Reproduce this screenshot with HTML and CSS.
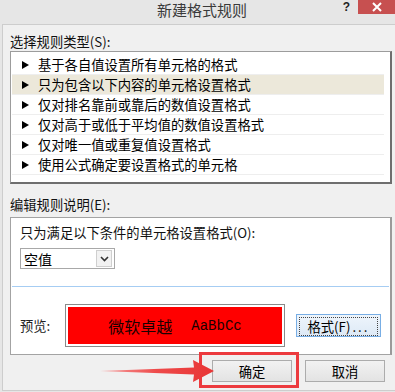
FILE: index.html
```html
<!DOCTYPE html>
<html lang="zh-CN">
<head>
    <meta charset="UTF-8">
    <title>新建格式规则</title>
    <link rel="stylesheet" href="styles.css">
</head>
<body>
    <div class="window">
        <div class="titlebar">
            <div></div>
            <div class="title">新建格式规则</div>
            <div class="controls">
                <span class="help">?</span>
                <span class="close">
                    <svg width="12" height="10" viewBox="0 0 12 10"><path d="M2 1 L10 9 M10 1 L2 9" stroke="#fff" stroke-width="2"/></svg>
                </span>
            </div>
        </div>

        <div class="client">
            <div class="label">选择规则类型(S):</div>
            <div class="listbox">
                <div class="item"><span class="tri"></span>基于各自值设置所有单元格的格式</div>
                <div class="item selected"><span class="tri"></span>只为包含以下内容的单元格设置格式</div>
                <div class="item"><span class="tri"></span>仅对排名靠前或靠后的数值设置格式</div>
                <div class="item"><span class="tri"></span>仅对高于或低于平均值的数值设置格式</div>
                <div class="item"><span class="tri"></span>仅对唯一值或重复值设置格式</div>
                <div class="item"><span class="tri"></span>使用公式确定要设置格式的单元格</div>
            </div>

            <div class="label label-edit">编辑规则说明(E):</div>
            <div class="editbox">
                <div class="cond">只为满足以下条件的单元格设置格式(O):</div>
                <div class="select">
                    <span class="select-text">空值</span>
                    <span class="select-btn">
                        <svg width="9" height="6" viewBox="0 0 9 6"><path d="M1 1 L4.5 4.5 L8 1" fill="none" stroke="#333" stroke-width="1.6"/></svg>
                    </span>
                </div>
                <div class="divider"></div>
                <div class="preview-row">
                    <span class="preview-label">预览:</span>
                    <div class="preview">
                        <div class="preview-fill"><span class="zh">微软卓越</span><span class="en">AaBbCc</span></div>
                    </div>
                    <button class="btn format-btn"><span class="focus">格式(F)<span class="dots">...</span></span></button>
                </div>
            </div>

            <div class="buttons">
                <button class="btn">确定</button>
                <button class="btn">取消</button>
            </div>
        </div>

        <!-- annotation on top of the screenshot -->
        <div class="highlight"></div>
        <svg class="arrow" width="230" height="40" viewBox="0 0 230 40">
            <defs>
                <linearGradient id="ag" x1="0" y1="0" x2="1" y2="0">
                    <stop offset="0" stop-color="#f6a0a0"/>
                    <stop offset="0.5" stop-color="#ee4a4a"/>
                    <stop offset="1" stop-color="#e83535"/>
                </linearGradient>
            </defs>
            <polygon points="100,21 194,17.5 193,10 214,21 193,32 194,24.5" fill="url(#ag)"/>
        </svg>
    </div>
</body>
</html>
```

FILE: styles.css
```css
body {
    margin: 0;
    font-family: "Noto Sans CJK SC", "Noto Sans", sans-serif;
    font-size: 13.3px;
    color: #111;
    background-color: #e6e6e6;
}

.window {
    position: relative;
    width: 395px;
    height: 392px;
    overflow: hidden;
    background-color: #e6e6e6;
}

.titlebar {
    display: grid;
    grid-template-columns: 1fr auto 1fr;
    height: 24px;
}

.title {
    padding-left: 9px;
    font-size: 15px;
    line-height: 20px;
    color: #3a3a3a;
}

.controls {
    display: flex;
    justify-content: flex-end;
    align-items: flex-start;
}

.help {
    margin: 1px 8px 0 0;
    font-family: "Liberation Sans", sans-serif;
    font-weight: bold;
    font-size: 12px;
    line-height: 12px;
    color: #222;
}

.close {
    display: flex;
    align-items: center;
    justify-content: center;
    width: 37px;
    height: 14px;
    background-color: #c75050;
}

.client {
    box-sizing: border-box;
    height: 367px;
    margin-left: 2px;
    padding: 9px 0 0 7px;
    border-top: 1px solid #cdcdcd;
    border-left: 1px solid #cdcdcd;
    border-bottom: 1px solid #cdcdcd;
    background-color: #f0f0f0;
}

.label {
    line-height: 16px;
    margin-bottom: 1px;
}

.label-edit {
    margin-top: 13px;
    margin-bottom: 4px;
}

.listbox {
    box-sizing: border-box;
    width: 382px;
    padding: 3px 0 7px;
    background-color: #fff;
    border-top: 1px solid #9c9c9c;
    border-left: 1px solid #9c9c9c;
    border-right: 2px solid #6e6e6e;
    border-bottom: 2px solid #6e6e6e;
}

.item {
    display: flex;
    align-items: center;
    box-sizing: border-box;
    height: 20px;
    margin: 0 6px 0 1px;
    padding-left: 10px;
    border-bottom: 1px solid #eeeeee;
    color: #000;
}

.item.selected {
    background-color: #ece8da;
}

.tri {
    width: 0;
    height: 0;
    margin-right: 9px;
    border-top: 4px solid transparent;
    border-bottom: 4px solid transparent;
    border-left: 7px solid #000;
}

.editbox {
    box-sizing: border-box;
    width: 382px;
    padding-bottom: 7px;
    background-color: #fff;
    border: 1px solid #a3a3a3;
    border-right: 2px solid #9a9a9a;
}

.cond {
    padding: 7px 0 0 9px;
    line-height: 16px;
}

.select {
    display: flex;
    align-items: center;
    box-sizing: border-box;
    width: 95px;
    height: 21px;
    margin: 7px 0 0 9px;
    border: 1px solid #a8a8a8;
    background-color: #fff;
}

.select-text {
    padding-left: 3px;
    font-size: 14px;
    color: #000;
}

.select-btn {
    display: flex;
    align-items: center;
    justify-content: center;
    box-sizing: border-box;
    width: 16px;
    height: 17px;
    margin-left: auto;
    margin-right: 2px;
    border: 1px solid #cfcfcf;
    background-color: #f2f2f2;
}

.divider {
    height: 1px;
    margin: 17px 1px 0;
    background-color: #a6cdf3;
}

.preview-row {
    display: flex;
    align-items: center;
    padding: 17px 0 0 9px;
}

.preview-label {
    width: 45px;
    color: #222;
}

.preview {
    box-sizing: border-box;
    width: 220px;
    height: 43px;
    padding: 2px;
    border: 1px solid #8a8a8a;
    background-color: #fff;
}

.preview-fill {
    display: flex;
    align-items: center;
    justify-content: center;
    height: 100%;
    background-color: #ff0000;
    color: #1a0000;
}

.zh {
    font-size: 16px;
}

.en {
    margin-left: 19px;
    font-family: "Liberation Mono", monospace;
    font-size: 14px;
}

.btn {
    box-sizing: border-box;
    width: 80px;
    height: 22px;
    padding: 0;
    border: 1px solid #acacac;
    background: linear-gradient(#f2f2f2, #e3e3e3);
    font-family: inherit;
    font-size: 13.3px;
    color: #000;
}

.format-btn {
    width: 85px;
    height: 23px;
    margin-left: 11px;
    padding: 2px;
    border-color: #78aee5;
    background: linear-gradient(#eef5fc, #dde9f6);
}

.focus {
    display: flex;
    align-items: center;
    justify-content: center;
    height: 100%;
    border: 1px dotted #444;
}

.dots {
    letter-spacing: 2px;
    margin-left: 2px;
}

.buttons {
    display: flex;
    justify-content: flex-end;
    gap: 13px;
    width: 382px;
    box-sizing: border-box;
    padding-right: 7px;
    margin-top: 5px;
}

.highlight {
    position: absolute;
    left: 199px;
    top: 352px;
    width: 100px;
    height: 36px;
    box-sizing: border-box;
    border: 3px solid #ec3a3e;
}

.arrow {
    position: absolute;
    left: 0;
    top: 350px;
}
```
